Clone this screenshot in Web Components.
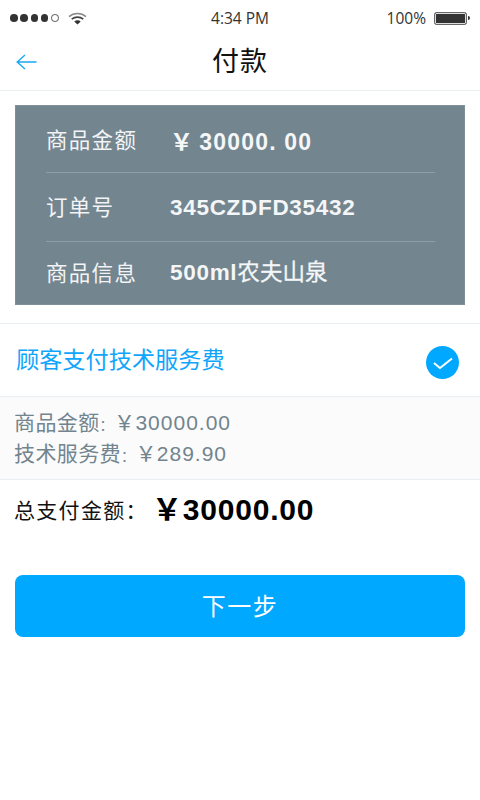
<!DOCTYPE html>
<html lang="zh">
<head>
<meta charset="utf-8">
<title>付款</title>
<style>
  html, body { margin: 0; height: 100%; background: #fff; }
  body { font-family: "Liberation Sans", "Noto Sans CJK SC", sans-serif; }
</style>
</head>
<body>
<pay-page></pay-page>

<script>
const CJK = '"Liberation Sans", "Noto Sans CJK SC", sans-serif'

class StatusBar extends HTMLElement {
  constructor () {
    super()
    this.attachShadow({mode: 'open'}).innerHTML = `
      <style>
        :host { display: grid; grid-template-columns: 1fr auto 1fr; align-items: center; height: 36px; color: #333; font: 15.5px "Open Sans", ${CJK}; }
        .left { display: flex; align-items: center; padding-left: 10px; }
        .dots { display: flex; gap: 2.7px; }
        .dots i { width: 7.6px; height: 7.6px; border-radius: 50%; background: #333; box-sizing: border-box; }
        .dots i.off { background: none; border: 1px solid #555; }
        .wifi { margin-left: 9px; margin-top: 1px; }
        .right { display: flex; align-items: center; justify-content: flex-end; padding-right: 10px; gap: 8px; }
        .bat { display: flex; align-items: center; }
        .bat b { display: block; width: 33px; height: 13px; box-sizing: border-box; border: 1px solid #666; border-radius: 2.5px; background: #333; box-shadow: inset 0 0 0 1px #ddd; }
        .bat u { display: block; width: 2px; height: 4px; background: #333; border-radius: 0 2px 2px 0; margin-left: 1px; }
      </style>
      <div class="left">
        <div class="dots"><i></i><i></i><i></i><i></i><i class="off"></i></div>
        <svg class="wifi" width="19" height="13" viewBox="0 0 19 13" fill="none">
          <path d="M1 4.6C5.8.4 13.2.4 18 4.6" stroke="#888" stroke-width="1.6"/>
          <path d="M3.7 7.2C7 4.4 12 4.4 15.3 7.2" stroke="#444" stroke-width="1.6"/>
          <path d="M6.3 9.4C8.2 8 10.8 8 12.7 9.4L9.5 12.6Z" fill="#333"/>
        </svg>
      </div>
      <div>4:34 PM</div>
      <div class="right"><span>100%</span><span class="bat"><b></b><u></u></span></div>`
  }
}

class NavBar extends HTMLElement {
  constructor () {
    super()
    this.attachShadow({mode: 'open'}).innerHTML = `
      <style>
        :host { display: flex; align-items: center; justify-content: center; height: 55px; border-bottom: 1px solid #e9eef0; position: relative; box-sizing: border-box; }
        svg { position: absolute; left: 16px; top: 18px; }
        h1 { margin: -8px 0 0; font: 400 27px ${CJK}; color: #111; letter-spacing: 1px; }
      </style>
      <svg width="21" height="16" viewBox="0 0 21 16" fill="none" stroke="#1aa7f5" stroke-width="1.4">
        <path d="M20.5 8H1.2M9 1 1.2 8 9 15"/>
      </svg>
      <h1><slot></slot></h1>`
  }
}

class InfoRow extends HTMLElement {
  constructor () {
    super()
    this.attachShadow({mode: 'open'}).innerHTML = `
      <style>
        :host { display: flex; align-items: center; box-sizing: border-box; height: 69px; padding-top: 2px; color: #fff; border-bottom: 1px solid #8d9ea8; }
        :host([first]) { height: 67px; padding-top: 4px; }
        :host([last]) { height: 62px; border-bottom: 0; }
        .k { width: 124px; margin-top: -6px; font-size: 21.5px; letter-spacing: 1.3px; color: #f2f4f5; white-space: nowrap; }
        ::slotted(*) { font-size: 22.5px; font-weight: 700; letter-spacing: .7px; color: #f4f6f7; white-space: nowrap; }
      </style>
      <span class="k"></span><slot></slot>`
    this.shadowRoot.querySelector('.k').textContent = this.getAttribute('label')
  }
}

class InfoCard extends HTMLElement {
  constructor () {
    super()
    this.attachShadow({mode: 'open'}).innerHTML = `
      <style>
        :host { display: block; margin: 14px 15px 0; height: 200px; box-sizing: border-box; background: #73858f; padding: 0 29px 0 30px; border: 1px solid #7f8f98; }
      </style>
      <slot></slot>`
  }
}

class FeeToggle extends HTMLElement {
  constructor () {
    super()
    this.attachShadow({mode: 'open'}).innerHTML = `
      <style>
        :host { display: flex; align-items: center; justify-content: space-between; margin-top: 18px; height: 74px; box-sizing: border-box; padding: 0 21px 0 16px; border-top: 1px solid #e9eef2; border-bottom: 1px solid #e9eef2; color: #0fa5fb; font-size: 23.2px; }
        span { margin-top: -4px; }
        svg { display: block; margin-top: 4px; }
      </style>
      <span><slot></slot></span>
      <svg width="33" height="33" viewBox="0 0 33 33">
        <circle cx="16.5" cy="16.5" r="16.5" fill="#00a8ff"/>
        <path d="M8 17 14 22 26 12.5" fill="none" stroke="#fff" stroke-width="2"/>
      </svg>`
  }
}

class FeeBreakdown extends HTMLElement {
  constructor () {
    super()
    this.attachShadow({mode: 'open'}).innerHTML = `
      <style>
        :host { display: flex; flex-direction: column; height: 83px; box-sizing: border-box; padding: 10px 0 0 14px; background: #fbfbfb; border-bottom: 1px solid #e9eef2; color: #72848e; font: 21px/31px ${CJK}; letter-spacing: .4px; white-space: nowrap; }
        ::slotted(div) { height: 31px; }
      </style>
      <slot></slot>`
  }
}

class TotalRow extends HTMLElement {
  constructor () {
    super()
    this.attachShadow({mode: 'open'}).innerHTML = `
      <style>
        :host { display: flex; align-items: center; height: 62px; padding: 0 0 0 14px; color: #111; white-space: nowrap; }
        .k { font-size: 21px; letter-spacing: 1.3px; margin-top: -5px; width: 138px; }
        ::slotted(*) { font: 700 30px ${CJK}; letter-spacing: .8px; color: #000; margin-top: -8px; }
      </style>
      <span class="k"></span><slot></slot>`
    this.shadowRoot.querySelector('.k').textContent = this.getAttribute('label')
  }
}

class NextButton extends HTMLElement {
  constructor () {
    super()
    this.attachShadow({mode: 'open'}).innerHTML = `
      <style>
        :host { display: flex; align-items: center; justify-content: center; margin: 33px 15px 0; height: 62px; box-sizing: border-box; padding-bottom: 4px; border-radius: 8px; background: #00a8ff; color: #fff; font-size: 24px; letter-spacing: 1.5px; }
      </style>
      <slot></slot>`
  }
}

class PayPage extends HTMLElement {
  constructor () {
    super()
    this.attachShadow({mode: 'open'}).innerHTML = `
      <style>
        :host { display: block; width: 480px; height: 800px; overflow: hidden; background: #fff; font-family: ${CJK}; }
        .yen { margin-right: 5px; font-size: 23px; }
        .amt { font-size: 23px; letter-spacing: 1.2px; margin-top: -2px; }
        .up { margin-top: -8px; }
        .cn { font-weight: 400; letter-spacing: .1px; -webkit-text-stroke: .3px #f4f6f7; }
        .c { font-size: 14px; }
        .n { letter-spacing: 1px; }
      </style>
      <status-bar></status-bar>
      <nav-bar>付款</nav-bar>
      <info-card>
        <info-row label="商品金额" first><span class="amt"><span class="yen">￥</span>30000. 00</span></info-row>
        <info-row label="订单号"><span>345CZDFD35432</span></info-row>
        <info-row label="商品信息" last><span class="up">500ml<span class="cn">农夫山泉</span></span></info-row>
      </info-card>
      <fee-toggle>顾客支付技术服务费</fee-toggle>
      <fee-breakdown>
        <div>商品金额<span class="c">：</span>￥<span class="n">30000.00</span></div>
        <div>技术服务费<span class="c">：</span>￥<span class="n">289.90</span></div>
      </fee-breakdown>
      <total-row label="总支付金额："><span>￥30000.00</span></total-row>
      <next-button>下一步</next-button>`
  }
}

customElements.define('status-bar', StatusBar)
customElements.define('nav-bar', NavBar)
customElements.define('info-row', InfoRow)
customElements.define('info-card', InfoCard)
customElements.define('fee-toggle', FeeToggle)
customElements.define('fee-breakdown', FeeBreakdown)
customElements.define('total-row', TotalRow)
customElements.define('next-button', NextButton)
customElements.define('pay-page', PayPage)
</script>
</body>
</html>
